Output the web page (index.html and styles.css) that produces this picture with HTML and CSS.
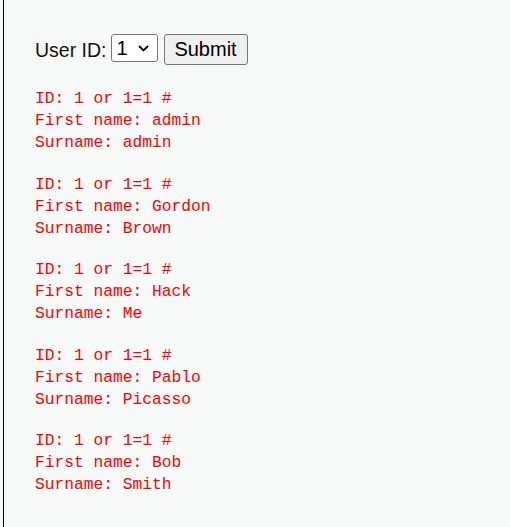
FILE: index.html
```html
<!DOCTYPE html>
<html>
<head>
<meta charset="utf-8">
<link rel="stylesheet" href="styles.css">
</head>
<body>
<div class="area">
  <form class="form-row">
    <span class="label">User ID:</span>
    <span class="sel-wrap">
      <select class="sel" name="id"><option>1</option><option>2</option><option>3</option><option>4</option><option>5</option></select>
      <svg class="chev" width="11" height="7" viewBox="0 0 11 7"><polyline points="1,1 5.5,5.5 10,1" fill="none" stroke="#000" stroke-width="1.8"/></svg>
    </span>
    <button class="btn" type="button">Submit</button>
  </form>
  <div class="results">
    <pre class="res">ID: 1 or 1=1 #
First name: admin
Surname: admin</pre>
    <pre class="res">ID: 1 or 1=1 #
First name: Gordon
Surname: Brown</pre>
    <pre class="res">ID: 1 or 1=1 #
First name: Hack
Surname: Me</pre>
    <pre class="res">ID: 1 or 1=1 #
First name: Pablo
Surname: Picasso</pre>
    <pre class="res">ID: 1 or 1=1 #
First name: Bob
Surname: Smith</pre>
  </div>
</div>
</body>
</html>
```
FILE: styles.css
```css
html, body {
  margin: 0;
  padding: 0;
  background: #f7f9f9;
  height: 100%;
}
body {
  font-family: "Liberation Sans", Arial, sans-serif;
  font-size: 20px;
  color: #000;
}
.area {
  margin-left: 3px;
  border-left: 1px solid #000;
  min-height: 100%;
  box-sizing: border-box;
  padding: 34px 0 0 31px;
}
.form-row {
  display: flex;
  align-items: flex-start;
  margin: 0;
}
.label {
  font-size: 19.5px;
  line-height: 32px;
  height: 31px;
  margin-right: 4px;
  color: #111;
}
.sel-wrap {
  position: relative;
  display: block;
  margin-right: 6px;
}
.sel {
  display: block;
  appearance: none;
  -webkit-appearance: none;
  font-family: "Liberation Sans", Arial, sans-serif;
  font-size: 20px;
  width: 47px;
  height: 28px;
  margin: 0;
  padding: 0 0 0 5px;
  background: #fff;
  border: 1px solid #767676;
  border-radius: 3px;
  color: #000;
}
.chev {
  position: absolute;
  right: 9px;
  top: 11px;
  pointer-events: none;
}
.btn {
  font-family: "Liberation Sans", Arial, sans-serif;
  font-size: 20px;
  width: 84px;
  height: 31px;
  margin: 0;
  padding: 0;
  background: #efefef;
  border: 1px solid #767676;
  border-radius: 3px;
  color: #000;
}
.results {
  display: flex;
  flex-direction: column;
  gap: 19.5px;
  padding-top: 23px;
}
.res {
  margin: 0;
  font-family: "Liberation Mono", "Courier New", monospace;
  font-size: 16.25px;
  line-height: 22px;
  color: #ff0000;
}
```
